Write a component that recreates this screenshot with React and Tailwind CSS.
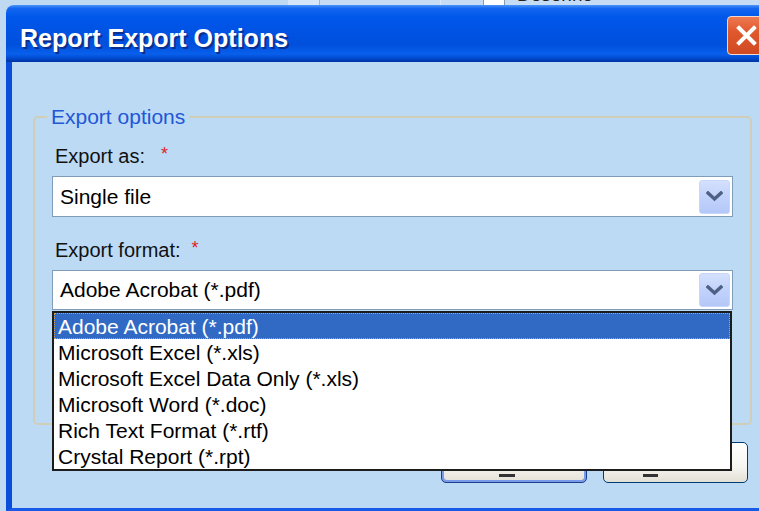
import React from "react";

const formats = [
  "Adobe Acrobat (*.pdf)",
  "Microsoft Excel (*.xls)",
  "Microsoft Excel Data Only (*.xls)",
  "Microsoft Word (*.doc)",
  "Rich Text Format (*.rtf)",
  "Crystal Report (*.rpt)",
];

function Chevron() {
  return (
    <svg width="17" height="11" viewBox="0 0 17 11">
      <polyline
        points="2,2 8.5,8 15,2"
        fill="none"
        stroke="#4d6185"
        strokeWidth="3.4"
        strokeLinecap="square"
      />
    </svg>
  );
}

function ComboBox({ value, height }) {
  return (
    <div
      className={`${height} flex items-center justify-between border border-[#7f9db9] bg-white pl-[7px] pr-[2px]`}
    >
      <span className="text-[21px] leading-[24px] text-black">{value}</span>
      <div className="flex h-[34px] w-[31px] items-center justify-center rounded-[3px] border border-[#c7d6fb] bg-[linear-gradient(180deg,#d4e0fd_0%,#c1d2fb_50%,#b4c8f8_100%)]">
        <Chevron />
      </div>
    </div>
  );
}

function Label({ text, gap }) {
  return (
    <div className="flex h-[24px] items-start pl-[3px]">
      <span className="text-[20px] leading-[24px] text-[#111]">{text}</span>
      <span className={`${gap} mt-[1px] text-[18px] leading-none text-[#e02424]`}>*</span>
    </div>
  );
}

export default function App() {
  return (
    <div className="flex h-[511px] w-[759px] flex-col overflow-hidden bg-[#c0d9f2] font-['Liberation_Sans',Arial,sans-serif]">
      {/* strip of the window lying behind the dialog */}
      <div className="flex h-[5px] shrink-0 overflow-hidden">
        <div className="w-[288px] bg-[#c0d9f2]" />
        <div className="w-[31px] bg-[#d6e5f7]" />
        <div className="w-[1px] bg-[#9fb3ca]" />
        <div className="w-[120px] bg-[#c6dcf4]" />
        <div className="w-[1px] bg-[#dce9f8]" />
        <div className="w-[42px] bg-[#c6dcf4]" />
        <div className="w-[22px] border-x border-[#8a9bb0] bg-white" />
        <div className="w-[110px] overflow-hidden bg-[#c6dcf4] pl-[12px]">
          <div className="mt-[-15px] text-[19px] leading-[20px] text-[#222]">Desenho</div>
        </div>
        <div className="flex-1 bg-[#c6dcf4]" />
      </div>

      {/* dialog window */}
      <div className="ml-[6px] flex w-[768px] flex-1 flex-col overflow-hidden rounded-t-[8px]">
        {/* title bar */}
        <div className="flex h-[57px] shrink-0 items-start bg-[linear-gradient(180deg,#4a94f8_0%,#1466f0_6%,#0058ea_20%,#0052e2_50%,#0050dc_70%,#0860ec_86%,#0048cc_94%,#0034a0_100%)] pl-[14px] pr-[8px]">
          <span className="mt-[18px] text-[25px] font-bold leading-[30px] text-white [text-shadow:2px_2px_0_#0b2f8f]">
            Report Export Options
          </span>
          <div className="ml-auto mt-[11px] flex h-[39px] w-[39px] items-center justify-center rounded-[4px] border border-[#f4d8cc] bg-[linear-gradient(180deg,#ee7a52_0%,#e0582d_40%,#d04a22_100%)]">
            <svg width="21" height="21" viewBox="0 0 21 21">
              <path d="M3 3 L18 18 M18 3 L3 18" stroke="white" strokeWidth="4" strokeLinecap="square" />
            </svg>
          </div>
        </div>

        {/* dialog body */}
        <div className="flex flex-1 flex-col border-b-[3px] border-l-[6px] border-b-[#1a5ae8] border-l-[#0b4ddb] bg-[#bddaf5] pl-[21px] pt-[43px]">
          <fieldset className="w-[719px] rounded-[5px] border-2 border-[#d0cdb8] px-[17px] pb-[113px]">
            <legend className="ml-[-5px] px-[4px] text-[21px] leading-[24px] text-[#2157d6]">
              Export options
            </legend>

            <div className="mt-[15px]">
              <Label text="Export as:" gap="ml-[16px]" />
            </div>
            <div className="mt-[8px]">
              <ComboBox value="Single file" height="h-[41px]" />
            </div>

            <div className="mt-[21px]">
              <Label text="Export format:" gap="ml-[11px]" />
            </div>
            <div className="relative mt-[8px]">
              <ComboBox value="Adobe Acrobat (*.pdf)" height="h-[40px]" />

              {/* open drop-down list */}
              <ul className="absolute left-0 top-full z-10 mt-[1px] w-[680px] border-2 border-[#1c1c1c] bg-white">
                {formats.map((f, i) => (
                  <li
                    key={f}
                    className={
                      i === 0
                        ? "h-[26px] border border-dotted border-[#d9a24a] bg-[#316ac5] pl-[3px] pt-[1px] text-[21px] leading-[23px] text-white"
                        : "h-[26px] border border-transparent pl-[3px] pt-[1px] text-[21px] leading-[23px] text-black"
                    }
                  >
                    {f}
                  </li>
                ))}
              </ul>
            </div>
          </fieldset>

          {/* dialog buttons, mostly covered by the list */}
          <div className="ml-[408px] mt-[17px] flex gap-[16px]">
            <div className="h-[41px] w-[146px] rounded-[5px] border border-[#1d3f8e] bg-[#7a9ce8] p-[2px]">
              <div className="flex h-full items-start rounded-[3px] bg-[linear-gradient(180deg,#ffffff_0%,#f6f5f0_60%,#e6e3da_100%)] pl-[55px] pt-[29px]">
                <div className="h-[3px] w-[16px] bg-[#333]" />
              </div>
            </div>
            <div className="flex h-[41px] w-[145px] items-start rounded-[5px] border border-[#003c74] bg-[linear-gradient(180deg,#ffffff_0%,#f6f5f0_60%,#e3e0d6_100%)] pl-[39px] pt-[31px]">
              <div className="h-[3px] w-[15px] bg-[#333]" />
            </div>
          </div>
        </div>
      </div>
    </div>
  );
}
